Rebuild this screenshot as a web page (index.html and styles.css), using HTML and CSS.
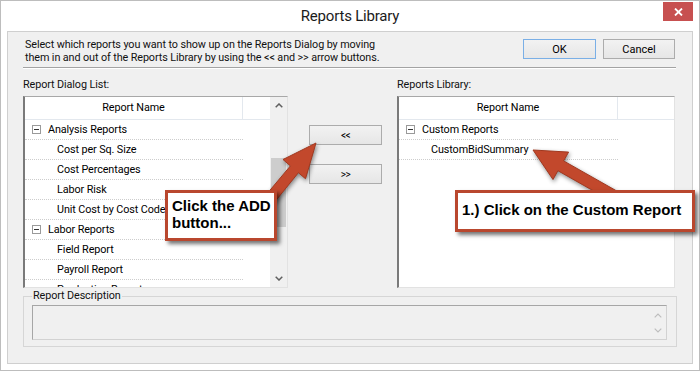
FILE: index.html
```html
<!DOCTYPE html>
<html lang="en">
<head>
<meta charset="utf-8">
<title>Reports Library</title>
<link rel="stylesheet" href="styles.css">
</head>
<body>
<div class="window">
  <div class="titlebar">
    <span class="title">Reports Library</span>
    <button class="close" aria-label="Close">
      <svg width="9" height="8" viewBox="0 0 9 8"><path d="M1 0.5 L8 7.5 M8 0.5 L1 7.5" stroke="#fff" stroke-width="1.8" fill="none"/></svg>
    </button>
  </div>
  <div class="panel">
    <div class="top">
      <p class="instr">Select which reports you want to show up on the Reports Dialog by moving<br>them in and out of the Reports Library by using the &lt;&lt; and &gt;&gt; arrow buttons.</p>
      <div class="actions">
        <button class="btn btn-default">OK</button>
        <button class="btn btn-cancel">Cancel</button>
      </div>
    </div>
    <div class="sep"></div>
    <div class="lists">
      <section class="col col-left">
        <div class="label">Report Dialog List:</div>
        <div class="listbox">
          <div class="lb-main">
            <div class="lb-head"><div class="hcell">Report Name</div><div class="hrest"></div></div>
            <div class="rows">
              <div class="row group"><span class="tog"></span>Analysis Reports</div>
              <div class="row child">Cost per Sq. Size</div>
              <div class="row child">Cost Percentages</div>
              <div class="row child">Labor Risk</div>
              <div class="row child">Unit Cost by Cost Code</div>
              <div class="row group"><span class="tog"></span>Labor Reports</div>
              <div class="row child">Field Report</div>
              <div class="row child">Payroll Report</div>
              <div class="row child">Production Report</div>
            </div>
          </div>
          <div class="vscroll">
            <div class="sbtn"><svg width="8" height="5" viewBox="0 0 8 5"><polyline points="0.7,4.3 4,1 7.3,4.3" fill="none" stroke="#5f5f5f" stroke-width="1.5"/></svg></div>
            <div class="track"><div class="thumb"></div></div>
            <div class="sbtn"><svg width="8" height="5" viewBox="0 0 8 5"><polyline points="0.7,0.7 4,4 7.3,0.7" fill="none" stroke="#5f5f5f" stroke-width="1.5"/></svg></div>
          </div>
        </div>
      </section>
      <div class="mid">
        <button class="btn btn-move">&lt;&lt;</button>
        <button class="btn btn-move">&gt;&gt;</button>
      </div>
      <section class="col col-right">
        <div class="label">Reports Library:</div>
        <div class="listbox">
          <div class="lb-main">
            <div class="lb-head"><div class="hcell">Report Name</div><div class="hrest"></div></div>
            <div class="rows">
              <div class="row group"><span class="tog"></span>Custom Reports</div>
              <div class="row child">CustomBidSummary</div>
            </div>
          </div>
        </div>
      </section>
    </div>
    <fieldset class="desc">
      <legend>Report Description</legend>
      <div class="desc-box">
        <div class="desc-text"></div>
        <div class="desc-scroll">
          <svg width="8" height="5" viewBox="0 0 8 5"><polyline points="0.7,4.3 4,1 7.3,4.3" fill="none" stroke="#bdbdbd" stroke-width="1.2"/></svg>
          <svg width="8" height="5" viewBox="0 0 8 5"><polyline points="0.7,0.7 4,4 7.3,0.7" fill="none" stroke="#bdbdbd" stroke-width="1.2"/></svg>
        </div>
      </div>
    </fieldset>
  </div>

  <svg class="arrows" width="700" height="372" viewBox="0 0 700 372">
    <polygon class="arrow" points="264.3,197 290.4,165.9 283,159.5 316,143 305.5,178.7 298.4,172.7 273,204"/>
    <polygon class="arrow" points="533,150 568.6,152.1 563.6,160.9 615.9,190.5 610.1,200.3 557.9,170.7 553,179.5"/>
  </svg>
  <div class="callout callout-add">Click the ADD<br>button...</div>
  <div class="callout callout-custom">1.) Click on the Custom Report</div>
</div>
</body>
</html>
```

FILE: styles.css
```css
* { box-sizing: border-box; }
html, body { margin: 0; padding: 0; background: #fff; }
body {
  font-family: Roboto, "Liberation Sans", Arial, sans-serif;
  font-size: 10.8px;
  letter-spacing: -0.1px;
  color: #000;
}

.window {
  position: relative;
  width: 700px;
  height: 371px;
  border: 1px solid #bdbdbd;
  background: #fff;
  display: flex;
  flex-direction: column;
}

.titlebar {
  height: 30px;
  display: grid;
  grid-template-columns: 1fr auto 1fr;
  align-items: center;
}
.title {
  grid-column: 2;
  font-size: 15px;
  letter-spacing: -0.2px;
  color: #1b1b1b;
}
.close {
  grid-column: 3;
  justify-self: end;
  align-self: start;
  margin: 1px 6px 0 0;
  width: 30px;
  height: 19px;
  padding: 0;
  border: 0;
  background: #c75050;
  display: flex;
  align-items: center;
  justify-content: center;
}

.panel {
  margin: 0 6px;
  height: 333px;
  border: 1px solid #cfcfcf;
  background: #f0f0f0;
  padding: 7px 16px 0 15px;
  display: flex;
  flex-direction: column;
}

.top {
  display: flex;
  justify-content: space-between;
  align-items: flex-start;
}
.instr {
  margin: 0;
  padding-left: 2px;
  line-height: 12.5px;
  color: #111;
}
.actions {
  display: flex;
  gap: 7px;
  margin-right: 1px;
}

.btn {
  font-family: inherit;
  font-size: 11px;
  letter-spacing: 0;
  color: #000;
  height: 20px;
  width: 73px;
  padding: 0;
  border: 1px solid #acacac;
  background: linear-gradient(#f2f2f2, #e6e6e6);
}
.btn-default { border-color: #7aafe6; }
.btn-cancel { width: 72px; }
.btn-move { font-size: 10px; letter-spacing: -0.5px; }

.sep {
  margin-top: 3px;
  height: 2px;
  border-top: 1px solid #a3a3a3;
  border-bottom: 1px solid #fff;
}

.lists {
  margin-top: 9px;
  display: flex;
}
.col { display: flex; flex-direction: column; }
.col-left { width: 265px; }
.col-right { width: 278px; }
.label {
  line-height: 14px;
  height: 18px;
  color: #111;
}
.mid {
  width: 73px;
  margin: 0 15px 0 21px;
  padding-top: 47px;
  display: flex;
  flex-direction: column;
  gap: 19px;
}

.listbox {
  height: 192px;
  background: #fff;
  border-top: 1px solid #a8a8a8;
  border-left: 2px solid #7a7a7a;
  border-right: 1px solid #e2e2e2;
  border-bottom: 1px solid #e2e2e2;
  display: flex;
  overflow: hidden;
}
.lb-main {
  flex: 1;
  min-width: 0;
  display: flex;
  flex-direction: column;
}
.lb-head {
  height: 23px;
  display: flex;
  border-bottom: 1px solid #e3e8ee;
  flex: none;
}
.hcell {
  width: 218px;
  border-right: 1px solid #e3e8ee;
  text-align: center;
  line-height: 22px;
}
.col-right .hcell { width: 219px; }
.hrest { flex: 1; }

.rows { width: 218px; }
.col-right .rows { width: 219px; }
.row {
  height: 20px;
  line-height: 19px;
  border-bottom: 1px dotted #cdcdcd;
  white-space: nowrap;
}
.row.group {
  display: flex;
  align-items: center;
  padding-left: 7px;
}
.row.child { padding-left: 32px; }
.tog {
  position: relative;
  width: 9px;
  height: 9px;
  border: 1px solid #9a9a9a;
  background: #fff;
  margin-right: 7px;
  flex: none;
}
.tog::before {
  content: "";
  position: absolute;
  left: 1px;
  top: 3px;
  width: 5px;
  height: 1px;
  background: #333;
}

.vscroll {
  width: 17px;
  flex: none;
  background: #f0f0f0;
  display: flex;
  flex-direction: column;
}
.sbtn {
  height: 17px;
  display: flex;
  align-items: center;
  justify-content: center;
  flex: none;
}
.track {
  flex: 1;
  padding: 44px 1px 0 1px;
}
.thumb {
  height: 69px;
  background: #cdcdcd;
}

.desc {
  margin: 1px -1px 0 0;
  border: 1px solid #d6d6d6;
  padding: 2px 9px 6px 8px;
  min-width: 0;
}
.desc legend {
  padding: 0 1px;
  line-height: 14px;
  color: #111;
}
.desc-box {
  height: 35px;
  display: flex;
  border-top: 1px solid #a6a6a6;
  border-left: 1px solid #a6a6a6;
  border-right: 1px solid #d2d2d2;
  border-bottom: 1px solid #d2d2d2;
  background: #f0f0f0;
}
.desc-text { flex: 1; }
.desc-scroll {
  width: 17px;
  display: flex;
  flex-direction: column;
  align-items: center;
  justify-content: center;
  gap: 10px;
}

.arrows {
  position: absolute;
  left: -1px;
  top: -1px;
  z-index: 5;
  pointer-events: none;
  filter: drop-shadow(1px 2px 2px rgba(0, 0, 0, 0.45));
}
.arrow {
  fill: #c2482c;
  stroke: #a0381f;
  stroke-width: 1;
  stroke-linejoin: round;
}

.callout {
  position: absolute;
  z-index: 6;
  background: #fff;
  border: 3px solid #b9472e;
  box-shadow: 3px 3px 4px rgba(0, 0, 0, 0.55);
  font-family: "Liberation Sans", Arial, sans-serif;
  font-weight: bold;
  font-size: 15px;
  letter-spacing: 0;
  line-height: 17px;
  color: #000;
  white-space: nowrap;
}
.callout-add {
  left: 164px;
  top: 189px;
  width: 112px;
  height: 51px;
  padding: 4px 4px 0 4px;
}
.callout-custom {
  left: 454px;
  top: 189px;
  width: 240px;
  height: 42px;
  padding: 8px 4px 0 4px;
}
```
